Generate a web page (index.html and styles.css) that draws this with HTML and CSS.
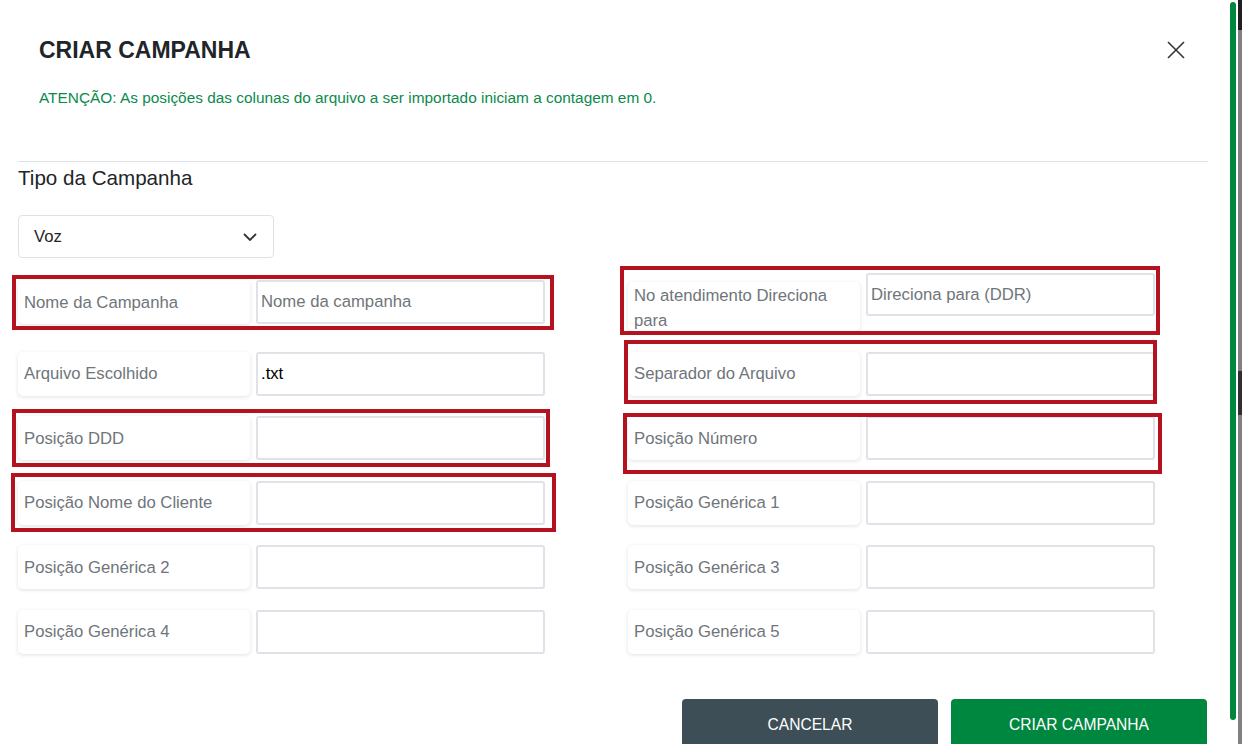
FILE: index.html
```html
<!DOCTYPE html>
<html lang="pt-BR">
<head>
    <meta charset="UTF-8"/>
    <meta name="viewport" content="width=device-width, initial-scale=1.0"/>
    <title>Criar Campanha</title>
    <link rel="stylesheet" href="styles.css">
</head>
<body>
<div class="modal">
    <div class="modal-header">
        <div>
            <h1 class="modal-title">CRIAR CAMPANHA</h1>
            <p class="warning">ATENÇÃO: As posições das colunas do arquivo a ser importado iniciam a contagem em 0.</p>
        </div>
        <button class="close" aria-label="Fechar">
            <svg width="18" height="18" viewBox="0 0 18 18">
                <path d="M1 1 L17 17 M17 1 L1 17" stroke="#333" stroke-width="1.6" fill="none"/>
            </svg>
        </button>
    </div>

    <div class="modal-body">
        <h2 class="section-title">Tipo da Campanha</h2>
        <div class="select">
            <span>Voz</span>
            <svg width="14" height="8" viewBox="0 0 14 8">
                <path d="M1 1 L7 7 L13 1" stroke="#333" stroke-width="1.8" fill="none"/>
            </svg>
        </div>

        <div class="fields">
            <div class="field">
                <label>Nome da Campanha</label>
                <input type="text" placeholder="Nome da campanha"/>
            </div>
            <div class="field tall">
                <label>No atendimento Direciona para</label>
                <input type="text" placeholder="Direciona para (DDR)"/>
            </div>

            <div class="field">
                <label>Arquivo Escolhido</label>
                <input type="text" value=".txt"/>
            </div>
            <div class="field">
                <label>Separador do Arquivo</label>
                <input type="text"/>
            </div>

            <div class="field">
                <label>Posição DDD</label>
                <input type="text"/>
            </div>
            <div class="field">
                <label>Posição Número</label>
                <input type="text"/>
            </div>

            <div class="field">
                <label>Posição Nome do Cliente</label>
                <input type="text"/>
            </div>
            <div class="field">
                <label>Posição Genérica 1</label>
                <input type="text"/>
            </div>

            <div class="field">
                <label>Posição Genérica 2</label>
                <input type="text"/>
            </div>
            <div class="field">
                <label>Posição Genérica 3</label>
                <input type="text"/>
            </div>

            <div class="field">
                <label>Posição Genérica 4</label>
                <input type="text"/>
            </div>
            <div class="field">
                <label>Posição Genérica 5</label>
                <input type="text"/>
            </div>
        </div>
    </div>

    <div class="modal-footer">
        <button class="btn btn-cancel">CANCELAR</button>
        <button class="btn btn-create">CRIAR CAMPANHA</button>
    </div>

    <!-- marcações vermelhas -->
    <div class="mark mark-1"></div>
    <div class="mark mark-2"></div>
    <div class="mark mark-3"></div>
    <div class="mark mark-4"></div>
    <div class="mark mark-5"></div>
    <div class="mark mark-6"></div>
</div>

<div class="rail"></div>
<div class="scrollbar">
    <div class="scroll-top"></div>
    <div class="scroll-thumb"></div>
</div>
</body>
</html>
```

FILE: styles.css
```css
* {
    margin: 0;
    padding: 0;
    box-sizing: border-box;
    font-family: "Liberation Sans", Arial, sans-serif;
}
body {
    width: 1242px;
    height: 744px;
    overflow: hidden;
    background: #fff;
    position: relative;
}
.modal {
    position: relative;
    width: 1226px;
    padding: 0 18px;
}
.modal-header {
    display: flex;
    justify-content: space-between;
    align-items: flex-start;
    padding: 36px 0 0 21px;
    height: 162px;
    border-bottom: 1px solid #dee2e6;
}
.modal-title {
    font-size: 23px;
    font-weight: bold;
    color: #212529;
    line-height: 28px;
}
.warning {
    margin-top: 25px;
    font-size: 15.4px;
    color: #0c8a4c;
}
.close {
    border: none;
    background: none;
    margin: 5px 23px 0 0;
    width: 18px;
    height: 18px;
}
.section-title {
    font-size: 20.6px;
    font-weight: normal;
    color: #212529;
    margin-top: 4px;
    line-height: 24px;
}
.select {
    margin-top: 25px;
    width: 256px;
    height: 43px;
    border: 1px solid #dee2e6;
    border-radius: 4px;
    display: flex;
    align-items: center;
    justify-content: space-between;
    padding: 0 16px 0 15px;
    font-size: 16.7px;
    color: #212529;
}
.fields {
    margin-top: 15px;
    display: grid;
    grid-template-columns: 527px 527px;
    column-gap: 83px;
    row-gap: 20.5px;
    align-items: center;
}
.field {
    display: flex;
    gap: 6px;
    height: 44px;
}
.field label {
    width: 232px;
    flex: none;
    display: flex;
    align-items: center;
    padding: 0 6px;
    font-size: 16.7px;
    line-height: 25px;
    color: #6f757b;
    background: #fff;
    border-radius: 5px;
    box-shadow: 0 1px 4px rgba(0, 0, 0, 0.12);
}
.field input {
    flex: 1;
    border: 2px solid #dfe3e8;
    border-radius: 3px;
    padding: 0 3px;
    font-size: 16.7px;
    color: #000;
    outline: none;
}
.field input::placeholder {
    color: #6f757b;
}
.field.tall {
    height: 58px;
    align-items: flex-start;
}
.field.tall label {
    margin-top: 9px;
    height: 49px;
    align-items: flex-start;
    padding-top: 1px;
}
.field.tall input {
    height: 43px;
}
.modal-footer {
    display: flex;
    justify-content: flex-end;
    gap: 13px;
    margin-top: 45px;
    padding-right: 1px;
}
.btn {
    width: 256px;
    height: 52px;
    border: none;
    border-radius: 4px;
    color: #fff;
    font-size: 15.6px;
}
.btn-cancel {
    background: #3d4e56;
}
.btn-create {
    background: #00873f;
}
.mark {
    position: absolute;
    border: 4px solid #b5121f;
}
.mark-1 { left: 12px; top: 275px; width: 542px; height: 55px; }
.mark-2 { left: 620px; top: 266px; width: 540px; height: 69px; }
.mark-3 { left: 624px; top: 340px; width: 533px; height: 64px; }
.mark-4 { left: 12px; top: 409px; width: 538px; height: 58px; }
.mark-5 { left: 623px; top: 413px; width: 539px; height: 61px; }
.mark-6 { left: 11px; top: 473px; width: 545px; height: 59px; }
.rail {
    position: absolute;
    left: 1230px;
    top: 2px;
    width: 6px;
    height: 718px;
    border-radius: 3px;
    background: #00873f;
}
.scrollbar {
    position: absolute;
    left: 1238px;
    top: 0;
    width: 4px;
    height: 744px;
    background: #808080;
}
.scroll-top {
    height: 30px;
    background: #1e1e1e;
}
.scroll-thumb {
    margin-top: 341px;
    height: 44px;
    background: #2e2e2e;
}
```
